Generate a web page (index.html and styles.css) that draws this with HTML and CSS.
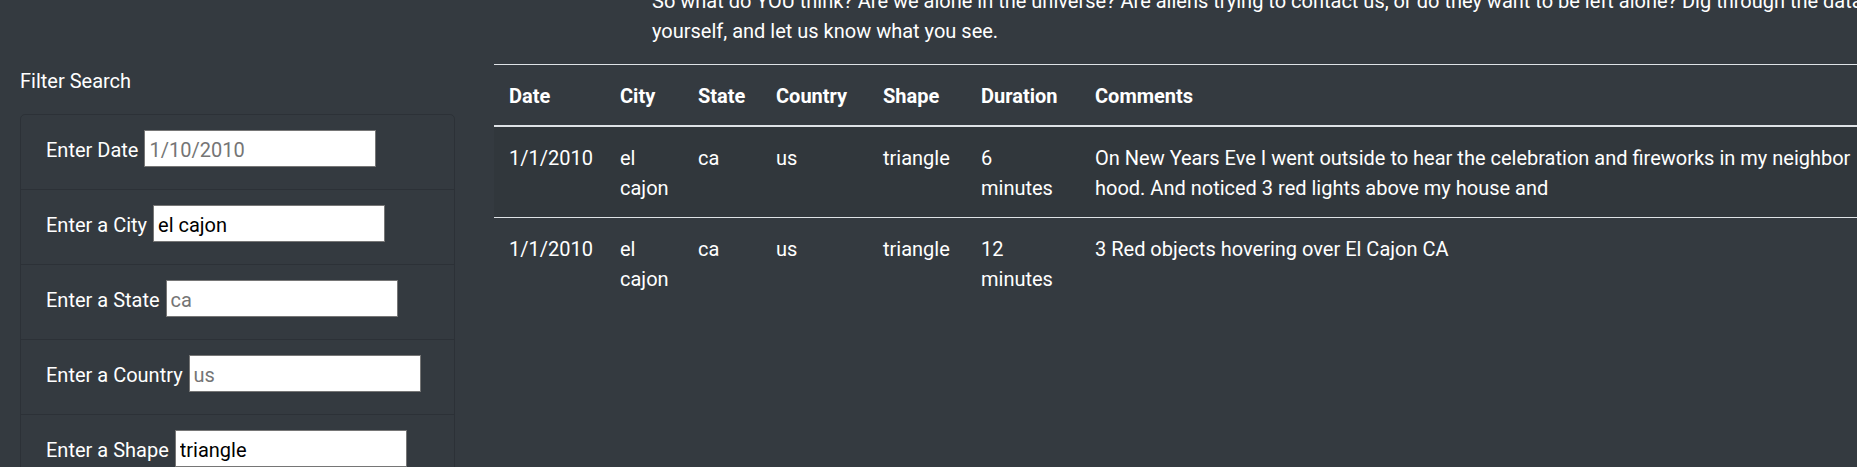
FILE: index.html
```html
<!DOCTYPE html>
<html lang="en">
<head>
<meta charset="utf-8">
<title>UFO Sightings</title>
<link rel="stylesheet" href="styles.css">
</head>
<body>
<div class="page">
  <div class="intro">
    <p>So what do YOU think? Are we alone in the universe? Are aliens trying to contact us, or do they want to be left alone? Dig through the data yourself, and let us know what you see.</p>
  </div>
  <div class="layout">
    <aside class="sidebar">
      <div class="filter-title">Filter Search</div>
      <ul class="filter-list">
        <li class="filter-item"><label class="filter-row">Enter Date <input class="filter-input" type="text" placeholder="1/10/2010"></label></li>
        <li class="filter-item"><label class="filter-row">Enter a City <input class="filter-input" type="text" value="el cajon"></label></li>
        <li class="filter-item"><label class="filter-row">Enter a State <input class="filter-input" type="text" placeholder="ca"></label></li>
        <li class="filter-item"><label class="filter-row">Enter a Country <input class="filter-input" type="text" placeholder="us"></label></li>
        <li class="filter-item"><label class="filter-row">Enter a Shape <input class="filter-input" type="text" value="triangle"></label></li>
      </ul>
    </aside>
    <main class="main">
      <table class="ufo-table">
        <colgroup>
          <col class="c-date"><col class="c-city"><col class="c-state"><col class="c-country"><col class="c-shape"><col class="c-duration"><col>
        </colgroup>
        <thead>
          <tr><th>Date</th><th>City</th><th>State</th><th>Country</th><th>Shape</th><th>Duration</th><th>Comments</th></tr>
        </thead>
        <tbody>
          <tr class="striped"><td>1/1/2010</td><td>el cajon</td><td>ca</td><td>us</td><td>triangle</td><td>6 minutes</td><td>On New Years Eve I went outside to hear the celebration and fireworks in my neighbor hood. And noticed 3 red lights above my house and</td></tr>
          <tr><td>1/1/2010</td><td>el cajon</td><td>ca</td><td>us</td><td>triangle</td><td>12 minutes</td><td>3 Red objects hovering over El Cajon CA</td></tr>
        </tbody>
      </table>
    </main>
  </div>
</div>
</body>
</html>
```
FILE: styles.css
```css
html, body {
  margin: 0;
  padding: 0;
  background: #343a40;
  overflow: hidden;
}
body {
  font-family: "Segoe UI", Roboto, "Helvetica Neue", Arial, "Noto Sans", sans-serif;
  font-size: 20px;
  line-height: 30px;
  color: #fff;
}
.page {
  width: 2300px;
}
.intro p {
  margin: -14px 0 18px 652px;
  width: 1270px;
}
.layout {
  display: flex;
  align-items: flex-start;
  padding-left: 20px;
  gap: 39px;
}
.sidebar {
  width: 435px;
  flex: none;
}
.filter-title {
  padding-top: 2px;
  margin-bottom: 18px;
}
.filter-list {
  list-style: none;
  margin: 0;
  padding: 0;
  border: 1px solid rgba(0, 0, 0, 0.14);
  border-radius: 5px;
}
.filter-item {
  padding: 15px 25px 22px;
  border-top: 1px solid rgba(0, 0, 0, 0.14);
}
.filter-item:first-child {
  border-top: none;
}
.filter-row {
  display: flex;
  align-items: baseline;
  gap: 6px;
}
.filter-input {
  box-sizing: border-box;
  width: 232px;
  height: 37px;
  margin: 0;
  padding: 2px 4px 0;
  border: 1px solid #767676;
  border-radius: 0;
  background: #fff;
  color: #000;
  font: inherit;
  line-height: 30px;
}
.filter-input::placeholder {
  color: #757575;
}
.main {
  width: 1400px;
  flex: none;
}
.ufo-table {
  width: 1400px;
  border-collapse: collapse;
  table-layout: fixed;
}
.c-date { width: 111px; }
.c-city { width: 78px; }
.c-state { width: 78px; }
.c-country { width: 107px; }
.c-shape { width: 98px; }
.c-duration { width: 114px; }
.ufo-table th,
.ufo-table td {
  padding: 16px 15px 14px;
  text-align: left;
  vertical-align: top;
  border-top: 1px solid #dee2e6;
}
.ufo-table th {
  font-weight: 700;
  border-bottom: 2px solid #dee2e6;
}
.ufo-table tbody tr:first-child td {
  border-top: none;
}
.striped {
  background: rgba(0, 0, 0, 0.05);
}
```
